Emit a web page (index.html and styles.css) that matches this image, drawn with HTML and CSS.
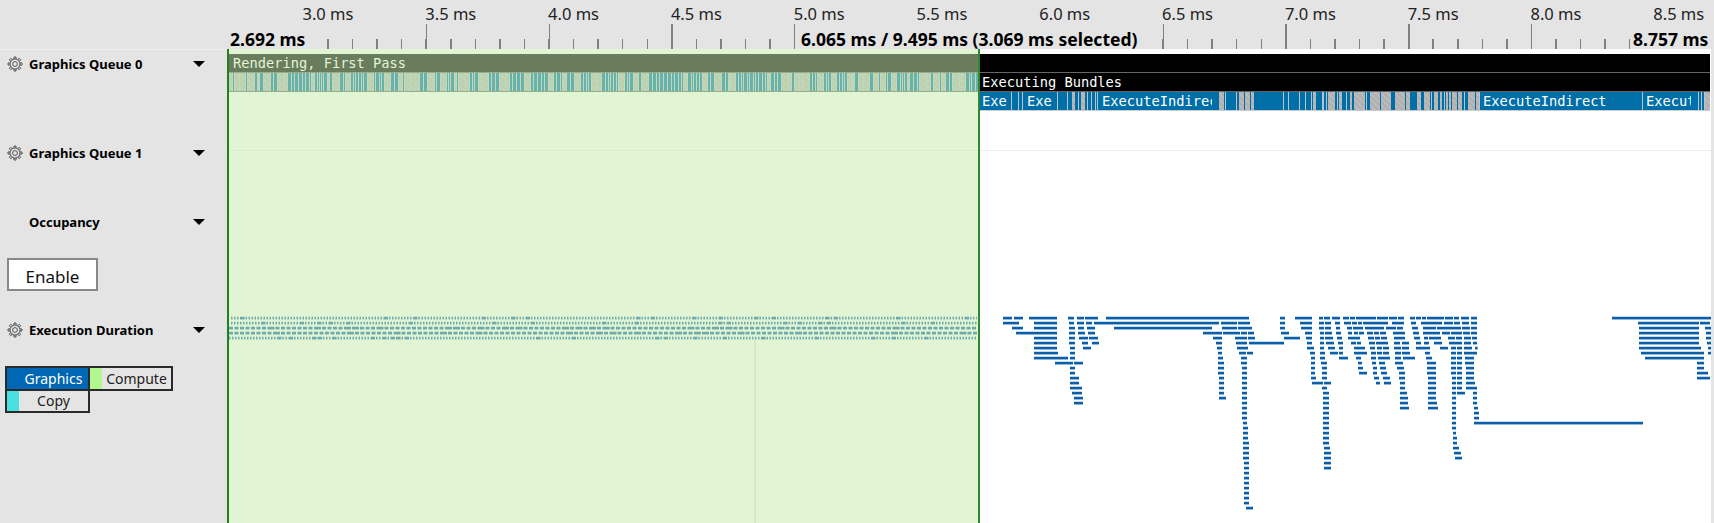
FILE: index.html
```html
<!DOCTYPE html>
<html>
<head>
  <meta charset="UTF-8">
  <title>Timeline</title>
  <link rel="stylesheet" href="styles.css">
</head>
<body>
  <svg width="0" height="0" class="defs">
    <symbol id="gear" viewBox="0 0 16 16">
      <g fill="none" stroke="#444" stroke-width="0.9">
        <circle cx="8" cy="8" r="2.4"/>
        <circle cx="8" cy="8" r="5"/>
        <path id="tooth" d="M6.9 3.1 L7 1 H9 L9.1 3.1"/>
        <use href="#tooth" transform="rotate(45 8 8)"/>
        <use href="#tooth" transform="rotate(90 8 8)"/>
        <use href="#tooth" transform="rotate(135 8 8)"/>
        <use href="#tooth" transform="rotate(180 8 8)"/>
        <use href="#tooth" transform="rotate(225 8 8)"/>
        <use href="#tooth" transform="rotate(270 8 8)"/>
        <use href="#tooth" transform="rotate(315 8 8)"/>
      </g>
    </symbol>
  </svg>

  <div class="ruler">
    <div class="ruler-labels">
      <span>3.0 ms</span><span>3.5 ms</span><span>4.0 ms</span><span>4.5 ms</span>
      <span>5.0 ms</span><span>5.5 ms</span><span>6.0 ms</span><span>6.5 ms</span>
      <span>7.0 ms</span><span>7.5 ms</span><span>8.0 ms</span><span>8.5 ms</span>
    </div>
    <div class="ruler-ticks">
      <div class="range range-start">2.692 ms</div>
      <div class="range range-mid">6.065 ms / 9.495 ms (3.069 ms selected)</div>
      <div class="range range-end">8.757 ms</div>
    </div>
  </div>

  <div class="main">
    <div class="sidebar">
      <div class="lane lane-q0">
        <svg class="gear"><use href="#gear"/></svg>
        <span class="lane-name">Graphics Queue 0</span>
        <span class="arrow"></span>
      </div>
      <div class="lane lane-q1">
        <svg class="gear"><use href="#gear"/></svg>
        <span class="lane-name">Graphics Queue 1</span>
        <span class="arrow"></span>
      </div>
      <div class="lane">
        <span class="gear"></span>
        <span class="lane-name">Occupancy</span>
        <span class="arrow"></span>
      </div>
      <button class="enable">Enable</button>
      <div class="lane lane-dur">
        <svg class="gear"><use href="#gear"/></svg>
        <span class="lane-name">Execution Duration</span>
        <span class="arrow"></span>
      </div>
      <div class="legend">
        <div class="legend-item legend-graphics">Graphics</div>
        <div class="legend-item"><i class="swatch swatch-compute"></i><span>Compute</span></div>
        <div class="legend-item"><i class="swatch swatch-copy"></i><span>Copy</span></div>
      </div>
    </div>

    <div class="chart">
      <svg id="flame" class="flame" viewBox="227 49 1484 474"></svg>
      <div class="row row-dark"><span class="row-text">Rendering, First Pass</span></div>
      <div class="row row-split">
        <div id="strip" class="strip"></div>
        <div class="bundles"><span class="row-text">Executing Bundles</span></div>
      </div>
      <div id="exec" class="row row-exec"></div>
      <div class="lane-line"></div>
      <div class="selection"></div>
    </div>
  </div>

  <script src="script.js"></script>
</body>
</html>
```

FILE: styles.css
```css
html, body {
  margin: 0;
  height: 100%;
}
body {
  background: #e4e4e4;
  color: #000;
  font-family: "Noto Sans", "Open Sans", sans-serif;
  overflow: hidden;
}
.defs {
  display: block;
  height: 0;
}

/* ruler */
.ruler {
  height: 49px;
  padding-left: 227px;
}
.ruler-labels {
  display: flex;
  height: 24px;
  padding-left: 75.5px;
  font-size: 16.5px;
  line-height: 27px;
  color: #222;
}
.ruler-labels span {
  flex: 0 0 122.8px;
  white-space: nowrap;
}
.ruler-ticks {
  display: flex;
  height: 25px;
  background:
    repeating-linear-gradient(90deg, #808080 0 1.5px, transparent 1.5px 122.8px) 75.6px 0 / 100% 100% no-repeat,
    repeating-linear-gradient(90deg, #808080 0 1.5px, transparent 1.5px 24.56px) 1.9px 15px / 100% 10px no-repeat;
}
.range {
  background: #e4e4e4;
  font-size: 17.5px;
  font-weight: 700;
  line-height: 31px;
  white-space: nowrap;
}
.range-start {
  width: 80px;
  padding-left: 3px;
}
.range-mid {
  width: 350px;
  margin-left: 485px;
  padding-left: 6px;
}
.range-end {
  margin-left: auto;
  width: 81px;
  padding-left: 3px;
}

/* main area */
.main {
  display: flex;
  height: 474px;
}
.sidebar {
  flex: 0 0 227px;
  border-top: 1px solid #efefef;
  box-sizing: border-box;
}
.lane {
  display: flex;
  align-items: center;
  height: 28px;
  padding-left: 7px;
}
.lane-q0 { margin-bottom: 61px; }
.lane-q1 { margin-bottom: 41px; }
.lane-dur { margin-top: 25px; }
.gear {
  flex: 0 0 16px;
  width: 16px;
  height: 16px;
}
.lane-name {
  flex: 0 0 164px;
  margin-left: 6px;
  font-size: 13px;
  font-weight: 700;
}
.arrow {
  width: 0;
  height: 0;
  margin-top: -1px;
  border-left: 6px solid transparent;
  border-right: 6px solid transparent;
  border-top: 6px solid #000;
}
.enable {
  display: block;
  width: 91px;
  height: 33px;
  margin: 22px 0 0 7px;
  background: #fff;
  border: 2px solid #888;
  font-family: inherit;
  font-size: 17px;
  line-height: 33px;
  color: #111;
  padding: 0;
}
.legend {
  display: grid;
  grid-template-columns: 83px 83px;
  grid-auto-rows: 22.5px;
  width: 166px;
  margin: 22px 0 0 5px;
}
.legend-item {
  display: flex;
  align-items: center;
  justify-content: center;
  margin: 0 -2px -2px 0;
  border: 2px solid #2a2a2a;
  box-sizing: border-box;
  font-size: 14px;
  color: #222;
}
.legend-graphics {
  background: #0067b5;
  color: #fff;
  padding-left: 12px;
}
.swatch {
  align-self: stretch;
  flex: 0 0 12px;
}
.legend-item span {
  flex: 1;
  text-align: center;
}
.swatch-compute { background: #b3f58e; }
.swatch-copy { background: #48e0e0; }

/* chart */
.chart {
  flex: 0 0 1484px;
  position: relative;
  box-sizing: border-box;
  padding: 5px 1px 0 2px;
  background: #fff;
  overflow: hidden;
}
.flame {
  position: absolute;
  left: 0;
  top: 0;
  width: 1484px;
  height: 474px;
}
.row {
  position: relative;
  display: flex;
  height: 18px;
  border-bottom: 1px solid #666;
  font-family: "DejaVu Sans Mono", "Liberation Mono", monospace;
  font-size: 13.7px;
  line-height: 18px;
  color: #fff;
  white-space: pre;
}
.row-dark {
  background: #000;
}
.row-text {
  padding-left: 4px;
}
.strip {
  display: flex;
  flex: 0 0 749px;
  overflow: hidden;
}
.bundles {
  flex: 1;
  background: #000;
}
.row-exec {
  margin-left: 750px;
  border-bottom-color: #ccc;
  background: #006fa8;
}
.seg {
  flex: none;
  box-sizing: border-box;
  overflow: hidden;
}
.seg-blue {
  background: #006fa8;
}
.seg-label {
  padding: 0 3px;
}
.seg-label span {
  display: block;
  overflow: hidden;
}
.seg-sep {
  background: #b8c4cc;
}
.seg-hatch {
  background: repeating-linear-gradient(45deg, #b2b2b2 0 3px, #c6c6c6 3px 4.2px);
}
.lane-line {
  position: absolute;
  left: 0;
  right: 0;
  top: 101px;
  height: 1px;
  background: #eee;
}
.selection {
  position: absolute;
  left: 0;
  top: 0;
  bottom: 0;
  width: 753px;
  box-sizing: border-box;
  background: rgba(198, 236, 174, 0.53);
  border-left: 2px solid #1f801f;
  border-right: 2px solid #2f8a2f;
}
```

FILE: script.js
```js
// small seeded generator so the busy strips come out the same every time
let seed = 12345;
function rnd() {
  seed = (seed * 16807) % 2147483647;
  return seed / 2147483647;
}

// execute row: [kind, start, end, label], gaps are filled with plain blue
const execSegs = [
  ["blue", 979, 1011, "Exe"], ["sep", 1011, 1012], ["sep", 1018, 1019], ["sep", 1022, 1023],
  ["blue", 1024, 1057, "Exe"], ["sep", 1057, 1058], ["sep", 1067, 1068], ["hatch", 1072, 1075],
  ["sep", 1078, 1079], ["hatch", 1081, 1085], ["sep", 1087, 1088], ["sep", 1091, 1092],
  ["sep", 1095, 1096], ["sep", 1097, 1098], ["blue", 1099, 1215, "ExecuteIndirect"],
  ["hatch", 1219, 1224], ["sep", 1225, 1226], ["sep", 1236, 1237], ["hatch", 1239, 1244],
  ["hatch", 1245, 1250], ["hatch", 1251, 1254], ["sep", 1283, 1284], ["sep", 1288, 1289],
  ["sep", 1299, 1300], ["sep", 1305, 1306], ["sep", 1311, 1312], ["hatch", 1313, 1316],
  ["sep", 1322, 1324], ["sep", 1326, 1327], ["hatch", 1328, 1335], ["sep", 1337, 1338],
  ["hatch", 1339, 1342], ["sep", 1346, 1347], ["hatch", 1350, 1352], ["hatch", 1354, 1365],
  ["sep", 1366, 1367], ["hatch", 1370, 1380], ["hatch", 1381, 1391], ["hatch", 1395, 1405],
  ["hatch", 1406, 1410], ["hatch", 1417, 1421], ["hatch", 1424, 1430], ["sep", 1431, 1432],
  ["hatch", 1434, 1438], ["hatch", 1440, 1442], ["sep", 1444, 1445], ["hatch", 1446, 1448],
  ["hatch", 1449, 1451], ["hatch", 1452, 1457], ["hatch", 1458, 1462], ["sep", 1464, 1465],
  ["hatch", 1468, 1475], ["hatch", 1476, 1479], ["sep", 1479, 1480],
  ["blue", 1480, 1642, "ExecuteIndirect"], ["sep", 1642, 1643], ["blue", 1643, 1694, "Execute"],
  ["sep", 1698, 1699], ["sep", 1701, 1702], ["sep", 1704, 1705], ["hatch", 1705, 1710]
];

function addSeg(parent, kind, width, label) {
  const seg = document.createElement("div");
  seg.className = "seg seg-" + kind;
  seg.style.width = width + "px";
  if (label) {
    const text = document.createElement("span");
    text.textContent = label;
    seg.classList.add("seg-label");
    seg.appendChild(text);
  }
  parent.appendChild(seg);
}

const exec = document.getElementById("exec");
let cursor = 979;
for (const [kind, start, end, label] of execSegs) {
  if (start > cursor) addSeg(exec, "blue", start - cursor);
  addSeg(exec, kind, end - start, label);
  cursor = end;
}

// left strip, the overlay tints it green
const strip = document.getElementById("strip");
let used = 0;
while (used < 749) {
  const w = rnd() < 0.7 ? 1 + Math.floor(rnd() * 3) : 2 + Math.floor(rnd() * 5);
  addSeg(strip, w < 4 && rnd() < 0.85 ? "blue" : "hatch", w);
  addSeg(strip, "sep", 1);
  used += w + 1;
}

// duration bars, one list per row. Units are 3x pixels from the two origins.
const barsA = [
  [99,126,132,159,177,261,294,312,321,342,345,384,408,837,930,945,975,1026,1047,1059,1062,1080,1086,1110,1119,1137,1140,1155],
  [99,147,192,261,297,312,321,342,348,366,372,747,753,801,804,840,930,945,990,1026,1047,1062,1065,1083,1095,1110,1122,1143,1146,1161,1164,1176],
  [126,159,192,261,297,315,324,342,351,375,432,726,756,801,804,846,930,945,993,1026,1047,1062,1065,1083,1098,1110,1131,1146,1149,1179],
  [138,261,297,315,324,345,354,375,699,756,759,810,813,831,834,852,933,957,1005,1026,1050,1062,1065,1086,1098,1113,1134,1146,1152,1164,1167,1182],
  [192,261,297,315,327,354,357,384,729,756,795,831,834,855,942,990,1008,1026,1050,1062,1065,1089,1101,1116,1134,1170],
  [192,261,297,315,336,354,366,387,738,756,798,831,837,942,1011,1026,1050,1062,1068,1092,1104,1119,1143,1158,1161,1173],
  [192,261,300,315,339,363,741,756,801,834,1011,1032,1050,1062,1074,1095,1107,1119,1152,1185],
  [192,264,300,315,744,756,807,828,831,849,1020,1035,1050,1065,1080,1104,1107,1119,1152,1191],
  [192,294,300,315,744,759,813,831,1023,1035,1050,1065,1107,1134,1158,1173],
  [255,309,312,339,744,762,813,831,1023,1035,1053,1071,1164,1176],
  [300,315,744,762,816,831,1023,1035,1056,1071,1164,1179],
  [300,315,744,762,816,831,1023,1035,1056,1071,1167,1191],
  [300,327,747,762,816,831,1023,1038,1056,1071],
  [300,327,747,762,816,831,1026,1059,1062,1083],
  [300,336,747,762,816,831,1056,1071],
  [306,336,747,762,816,831,1059,1077],
  [312,339,747,768,816,831,1059,1077],
  [312,339,816,831,1059,1077],
  [816,831,1059,1077],
  [816,831,1059,1077],
  [816,831,1059,1077],
  [819,831,1059,1077],
  [819,834,1059,1077],
  [819,834,1059,1077],
  [819,834,1059,1077],
  [819,837,1059,1077],
  [819,837,1062,1080],
  [819,837,1062,1083],
  [819,837,1062,1083],
  [822,837,1062,1083],
  [822,837,1062,1083],
  [822,837],
  [822,837],
  [822,837],
  [822,837],
  [822,837],
  [822,837],
  [822,837],
  [828,849]
];
const barsB = [
  [168,228,231,264,267,291,294,312,330,345,348,363,366,378,381,432,435,459,462,477,483,507,513,531,936,1233],
  [189,264,276,312,333,348,363,426,432,459,462,480,486,507,513,531,1014,1197,1200,1230],
  [195,252,258,288,291,309,336,354,369,408,411,483,486,510,513,531,1017,1197,1215,1233],
  [201,219,222,237,240,258,279,315,339,357,369,420,426,450,453,486,489,510,513,531,1017,1197,1218,1233],
  [204,222,225,240,243,261,282,315,342,360,372,384,387,423,444,465,468,486,492,513,516,531,1017,1197,1218,1233],
  [207,225,228,264,282,300,306,327,348,363,372,387,402,426,447,486,492,513,519,531,1017,1197,1221,1233],
  [210,225,231,246,249,267,282,303,306,327,348,390,420,444,453,468,471,486,492,516,525,533,1017,1203,1224,1233],
  [213,228,231,246,249,267,285,303,306,330,375,390,453,468,471,486,492,531,1023,1212,1224,1233],
  [213,228,234,270,285,303,309,345,378,396,453,468,471,486,495,522,1035,1212],
  [216,228,237,255,285,309,381,408,453,468,471,486,495,522,1191,1212],
  [219,231,240,258,291,312,381,408,453,468,471,486,498,522,1191,1212],
  [219,231,243,261,297,315,381,408,453,468,471,486,498,522,1191,1224],
  [222,237,249,270,297,315,384,408,456,468,471,486,498,522,1191,1230],
  [228,240,252,273,300,315,384,408,456,468,471,486,498,525],
  [300,315,384,408,456,468,471,486,498,531],
  [300,321,384,408,456,468,471,495,519,531],
  [300,324,384,408,456,468,519,531],
  [300,324,384,411,456,468,519,531],
  [300,327,384,414,456,468,522,534],
  [456,468,522,537],
  [456,468,522,537],
  [456,468,522,1029],
  [456,468],
  [459,468],
  [459,471],
  [459,471],
  [459,477],
  [462,483],
  [465,486]
];

const svgNS = "http://www.w3.org/2000/svg";
const flame = document.getElementById("flame");

function rect(x, y, w, h, fill) {
  const el = document.createElementNS(svgNS, "rect");
  el.setAttribute("x", x);
  el.setAttribute("y", y);
  el.setAttribute("width", w);
  el.setAttribute("height", h);
  el.setAttribute("fill", fill);
  flame.appendChild(el);
}

function bar(x1, x2, row) {
  const y = 316 + row * 5;
  rect(x1, y, x2 - x1, 1, "#c4d9ed");
  rect(x1, y + 1, x2 - x1, 2, "#0b5fa8");
  rect(x1, y + 3, x2 - x1, 1, "#94b8da");
}

function addBars(rows, origin) {
  rows.forEach((list, row) => {
    for (let i = 0; i < list.length; i += 2) {
      bar(origin + list[i] / 3, origin + list[i + 1] / 3, row);
    }
  });
}

// faint time marker under the selection
rect(754, 338, 2, 185, "#e6e6e6");

addBars(barsA, 970);
addBars(barsB, 1300);

// same bars squeezed together inside the selection
[[1.5, 3], [1.5, 3], [4, 5.5], [4, 5.5], [1.5, 3]].forEach(([w, step], row) => {
  let x = row < 2 ? 231 : 229;
  while (x < 977) {
    const wide = rnd() < (w < 2 ? 0.07 : 0.15);
    const width = wide ? w + 3 : w;
    bar(x, Math.min(x + width, 977), row);
    x += wide ? width + 1 : step;
  }
});
```
